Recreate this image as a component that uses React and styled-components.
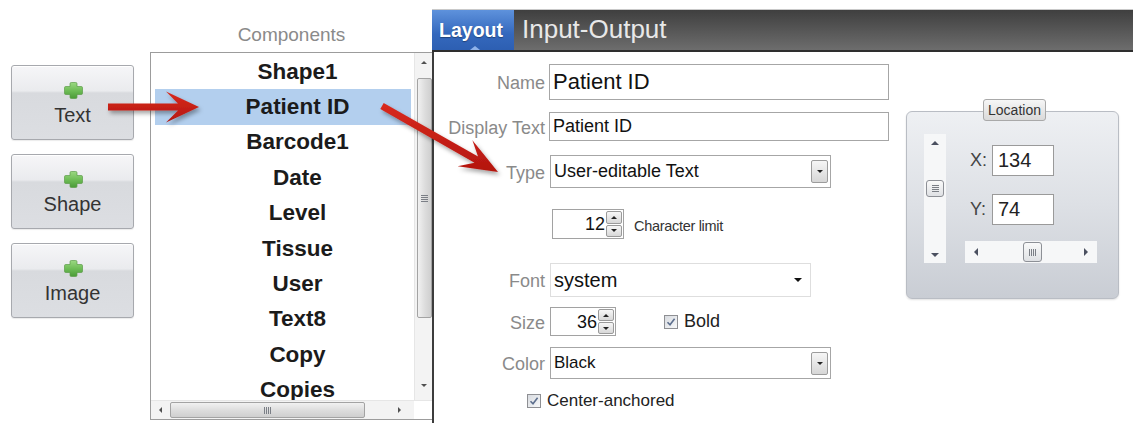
import React from "react";
import styled, { createGlobalStyle, css } from "styled-components";

const GlobalStyle = createGlobalStyle`
  html, body { margin: 0; padding: 0; background: #fff; }
  body { font-family: "Liberation Sans", Arial, sans-serif; }
  * { box-sizing: border-box; }
`;

const Page = styled.div`
  position: relative;
  width: 1133px;
  height: 423px;
  overflow: hidden;
  display: flex;
  background: #fff;
  font-family: "Liberation Sans", Arial, sans-serif;
`;

/* ---------- small shared pieces ---------- */

const Tri = styled.span`
  display: block;
  width: 0;
  height: 0;
  flex: none;
  ${({ $dir = "down", $s = 4, $c = "#505050" }) => {
    const t = `${$s}px solid transparent`;
    const f = `${$s}px solid ${$c}`;
    if ($dir === "up") return css`border-left: ${t}; border-right: ${t}; border-bottom: ${f};`;
    if ($dir === "down") return css`border-left: ${t}; border-right: ${t}; border-top: ${f};`;
    if ($dir === "left") return css`border-top: ${t}; border-bottom: ${t}; border-right: ${f};`;
    return css`border-top: ${t}; border-bottom: ${t}; border-left: ${f};`;
  }}
`;

const Grip = styled.span`
  display: block;
  flex: none;
  width: 7px;
  height: 7px;
  background: repeating-linear-gradient(
    ${({ $vertical }) => ($vertical ? "90deg" : "180deg")},
    #7b7f86 0 1px,
    transparent 1px 2px
  );
`;

const Spacer = styled.span`
  flex: ${({ $w }) => ($w ? "none" : "1")};
  width: ${({ $w }) => ($w ? `${$w}px` : "auto")};
`;

/* ---------- left palette ---------- */

const Palette = styled.div`
  width: 150px;
  flex: none;
  padding: 65px 0 0 11px;
  display: flex;
  flex-direction: column;
  gap: 14px;
`;

const AddButton = styled.button`
  width: 123px;
  height: 75px;
  border: 1px solid #a7a9ae;
  border-radius: 3px;
  background: linear-gradient(#f6f6f8 0%, #eaebee 34%, #d8dade 37%, #dcdee2 100%);
  box-shadow: inset 0 1px 0 #fff, 0 1px 1px rgba(0, 0, 0, 0.08);
  display: flex;
  flex-direction: column;
  align-items: center;
  padding: 16px 0 0;
  gap: 5px;
  font-family: inherit;
  font-size: 20px;
  line-height: 22px;
  color: #333;
  cursor: pointer;

  svg {
    flex: none;
    margin-left: 1px;
  }
`;

const PlusIcon = () => (
  <svg width="19" height="17" viewBox="0 0 19 17">
    <defs>
      <linearGradient id="plusFill" x1="0" y1="0" x2="0" y2="1">
        <stop offset="0" stopColor="#9bd882" />
        <stop offset="0.5" stopColor="#6fbd57" />
        <stop offset="1" stopColor="#4a9b37" />
      </linearGradient>
    </defs>
    <path
      d="M6 1.8 Q6 0.5 7.3 0.5 H11.7 Q13 0.5 13 1.8 V4.5 H17.2 Q18.5 4.5 18.5 5.8 V11.2 Q18.5 12.5 17.2 12.5 H13 V15.2 Q13 16.5 11.7 16.5 H7.3 Q6 16.5 6 15.2 V12.5 H1.8 Q0.5 12.5 0.5 11.2 V5.8 Q0.5 4.5 1.8 4.5 H6 Z"
      fill="url(#plusFill)"
      stroke="#5c9c49"
      strokeWidth="0.7"
    />
  </svg>
);

/* ---------- component list ---------- */

const ListColumn = styled.div`
  width: 283px;
  flex: none;
  display: flex;
  flex-direction: column;
`;

const ListTitle = styled.div`
  height: 52px;
  padding-top: 24px;
  text-align: center;
  font-size: 19px;
  line-height: 22px;
  color: #8a8a8a;
`;

const ListBox = styled.div`
  height: 368px;
  border: 1px solid #9c9c9c;
  border-right: none;
  display: flex;
  flex-direction: column;
`;

const ListBody = styled.div`
  flex: 1;
  min-height: 0;
  display: flex;
`;

const Items = styled.ul`
  flex: 1;
  margin: 0;
  padding: 1px 3px 0 4px;
  list-style: none;
  overflow: hidden;
`;

const Item = styled.li`
  height: 35.4px;
  display: flex;
  align-items: center;
  justify-content: center;
  padding-left: 29px;
  font-weight: bold;
  font-size: 22.5px;
  color: #1b1b1b;
  white-space: nowrap;
  background: ${({ $selected }) => ($selected ? "#b3cfee" : "transparent")};
`;

const VScroll = styled.div`
  width: ${({ $w }) => $w}px;
  flex: none;
  display: flex;
  flex-direction: column;
  align-items: center;
  background: #f3f3f3;
  border-left: 1px solid #e6e6e6;
`;

const ScrollEnd = styled.div`
  height: ${({ $h }) => $h}px;
  flex: none;
  display: flex;
  align-items: center;
  justify-content: center;
  align-self: stretch;
`;

const VThumb = styled.div`
  width: 15px;
  height: ${({ $h }) => $h}px;
  margin-top: ${({ $mt }) => $mt}px;
  flex: none;
  border: 1px solid #a3a3a3;
  border-radius: 2px;
  background: linear-gradient(90deg, #f1f1f1, #dcdcdc 55%, #cfcfcf);
  display: flex;
  align-items: center;
  justify-content: center;
`;

const HScroll = styled.div`
  height: 19px;
  flex: none;
  display: flex;
  align-items: center;
  background: #f3f3f3;
  border-top: 1px solid #e6e6e6;
`;

const HEnd = styled.div`
  width: ${({ $w }) => $w}px;
  height: 100%;
  flex: none;
  display: flex;
  align-items: center;
  justify-content: center;
`;

const HThumb = styled.div`
  width: ${({ $w }) => $w}px;
  height: 16px;
  flex: none;
  border: 1px solid #a3a3a3;
  border-radius: 2px;
  background: linear-gradient(#f1f1f1, #dcdcdc 55%, #cfcfcf);
  display: flex;
  align-items: center;
  justify-content: center;
`;

const Corner = styled.div`
  width: 19px;
  height: 100%;
  background: #fff;
  flex: none;
`;

/* ---------- editor panel ---------- */

const Editor = styled.div`
  flex: 1;
  display: flex;
  flex-direction: column;
  padding-top: 9px;
  margin-left: -1px;
`;

const TabBar = styled.div`
  height: 43px;
  flex: none;
  border-top: 1px solid #c9c9c9;
  border-bottom: 2px solid #2e2e2e;
  background: linear-gradient(#3f3f3f, #6d6d6d);
  display: flex;
  align-items: stretch;
`;

const Tab = styled.div`
  position: relative;
  display: flex;
  align-items: center;
  ${({ $active }) =>
    $active
      ? css`
          width: 82px;
          justify-content: center;
          padding-right: 4px;
          font-size: 19.5px;
          background: linear-gradient(#5e92dc, #3468bd 60%, #2d5fb2);
          color: #fff;
          font-weight: bold;
          text-shadow: 0 1px 1px rgba(0, 0, 0, 0.35);
        `
      : css`
          padding: 0 0 2px 8px;
          color: #e8e8e8;
          font-size: 26px;
        `}
`;

const TabNotch = styled.span`
  position: absolute;
  left: 38px;
  bottom: 0;
  border-left: 5px solid transparent;
  border-right: 5px solid transparent;
  border-bottom: 4px solid #8fb3ea;
`;

const EditorBody = styled.div`
  flex: 1;
  display: flex;
  border-left: 2px solid #3c3c3c;
`;

const Form = styled.div`
  width: 461px;
  flex: none;
  display: flex;
  flex-direction: column;
`;

const Row = styled.div`
  display: flex;
  align-items: center;
  height: ${({ $h }) => $h}px;
  margin-top: ${({ $mt }) => $mt}px;
  padding-left: ${({ $indent = 0 }) => $indent}px;
`;

const Label = styled.span`
  width: 111px;
  flex: none;
  text-align: right;
  font-size: 18px;
  color: #8a8a8a;
  margin-right: ${({ $gap = 4 }) => $gap}px;
  padding-top: 3px;
`;

const TextBox = styled.div`
  width: ${({ $w }) => $w}px;
  height: 100%;
  border: 1px solid ${({ $light }) => ($light ? "#dedede" : "#a6a6a6")};
  background: #fff;
  display: flex;
  align-items: center;
  padding: 0 3px;
  font-size: ${({ $fs }) => $fs}px;
  color: #111;
  white-space: nowrap;
`;

const BoxText = styled.span`
  flex: 1;
`;

const DropButton = styled.span`
  width: 17px;
  height: 23px;
  flex: none;
  border: 1px solid #9c9c9c;
  border-radius: 2px;
  background: linear-gradient(#f6f6f6, #d6d6d6);
  display: flex;
  align-items: center;
  justify-content: center;
  margin-right: -1px;
`;

const Spin = styled.div`
  width: ${({ $w }) => $w}px;
  height: 100%;
  border: 1px solid #a2a2a2;
  background: #fff;
  display: flex;
  align-items: stretch;
  padding: 1px 1px 1px 0;
  font-size: 18px;
  color: #111;
`;

const SpinValue = styled.span`
  flex: 1;
  align-self: center;
  text-align: right;
  padding-right: 1px;
  padding-top: 1px;
`;

const SpinButtons = styled.div`
  width: 16px;
  flex: none;
  display: flex;
  flex-direction: column;
  gap: 1px;
`;

const SpinButton = styled.span`
  flex: 1;
  border: 1px solid #9a9a9a;
  border-radius: 2px;
  background: linear-gradient(#f7f7f7, #d8d8d8);
  display: flex;
  align-items: center;
  justify-content: center;
`;

const Hint = styled.span`
  margin-left: 10px;
  padding-top: 4px;
  font-size: 14.5px;
  letter-spacing: -0.3px;
  color: #333;
`;

const CheckLabel = styled.label`
  display: flex;
  align-items: center;
  gap: ${({ $gap = 6 }) => $gap}px;
  margin-left: ${({ $ml = 0 }) => $ml}px;
  font-size: ${({ $fs = 18 }) => $fs}px;
  color: #222;
`;

const CheckBox = styled.span`
  width: 14px;
  height: 14px;
  flex: none;
  border: 1px solid #8e8f93;
  background: linear-gradient(135deg, #d8dbe0, #f7f8f9);
  display: flex;
  align-items: center;
  justify-content: center;
`;

const Tick = () => (
  <svg width="10" height="10" viewBox="0 0 10 10">
    <path d="M1.5 5.2 L4 7.8 L8.6 1.8" fill="none" stroke="#5d6f8e" strokeWidth="1.6" />
  </svg>
);

const Spinner = ({ value, width }) => (
  <Spin $w={width}>
    <SpinValue>{value}</SpinValue>
    <SpinButtons>
      <SpinButton>
        <Tri $dir="up" $s={3} $c="#222" />
      </SpinButton>
      <SpinButton>
        <Tri $dir="down" $s={3} $c="#222" />
      </SpinButton>
    </SpinButtons>
  </Spin>
);

/* ---------- location group ---------- */

const LocationGroup = styled.div`
  position: relative;
  width: 213px;
  height: 188px;
  margin: 59px 0 0 11px;
  border: 1px solid #b9bdc4;
  border-radius: 6px;
  background: linear-gradient(#eef0f3, #dde0e5 50%, #c9cdd4);
  box-shadow: 0 1px 2px rgba(0, 0, 0, 0.12);
  display: flex;
  padding: 22px 0 0 17px;
`;

const GroupLegend = styled.span`
  position: absolute;
  top: -13px;
  left: 76px;
  width: 63px;
  height: 22px;
  border: 1px solid #a9a9a9;
  border-radius: 3px;
  background: linear-gradient(#f6f6f6, #dadada);
  font-size: 14px;
  color: #333;
  display: flex;
  align-items: center;
  justify-content: center;
`;

const LocationBar = styled.div`
  width: 22px;
  height: 129px;
  flex: none;
  background: #f6f7f8;
  display: flex;
  flex-direction: column;
  align-items: center;
`;

const SmallThumb = styled.div`
  width: ${({ $w }) => $w}px;
  height: ${({ $h }) => $h}px;
  margin-top: ${({ $mt = 0 }) => $mt}px;
  margin-left: ${({ $ml = 0 }) => $ml}px;
  flex: none;
  border: 1px solid #8d9096;
  border-radius: 3px;
  background: linear-gradient(#fafafa, #dfe1e4);
  display: flex;
  align-items: center;
  justify-content: center;
`;

const LocationFields = styled.div`
  margin-left: 19px;
  display: flex;
  flex-direction: column;
`;

const CoordRow = styled.div`
  display: flex;
  align-items: center;
  height: 31px;
  margin-top: ${({ $mt }) => $mt}px;
  padding-left: 5px;
`;

const CoordLabel = styled.span`
  width: 22px;
  font-size: 18px;
  color: #444;
`;

const CoordBox = styled.span`
  width: 62px;
  height: 100%;
  border: 1px solid #9a9a9a;
  background: #fff;
  display: flex;
  align-items: center;
  padding-left: 5px;
  font-size: 20px;
  color: #222;
`;

const LocationHBar = styled.div`
  width: 132px;
  height: 22px;
  margin-top: 16px;
  background: #f6f7f8;
  display: flex;
  align-items: center;
  padding: 0 9px;
`;

/* ---------- callout arrows ---------- */

const Overlay = styled.svg`
  position: absolute;
  left: 0;
  top: 0;
  pointer-events: none;
`;

function arrowPoints(x1, y1, x2, y2, shaft, head, wing, notch) {
  const dx = x2 - x1;
  const dy = y2 - y1;
  const len = Math.hypot(dx, dy);
  const ux = dx / len;
  const uy = dy / len;
  const nx = -uy;
  const ny = ux;
  const at = (d, o) => [x1 + ux * d + nx * o, y1 + uy * d + ny * o];
  const pts = [
    at(0, -shaft),
    at(len - notch, -shaft),
    at(len - head, -wing),
    at(len, 0),
    at(len - head, wing),
    at(len - notch, shaft),
    at(0, shaft),
  ];
  return pts.map((p) => p.map((v) => v.toFixed(1)).join(",")).join(" ");
}

const Arrows = () => (
  <Overlay width="1133" height="423" viewBox="0 0 1133 423">
    <defs>
      <filter id="arrowShadow" x="-20%" y="-50%" width="140%" height="200%">
        <feDropShadow dx="2" dy="3" stdDeviation="2" floodColor="#000" floodOpacity="0.35" />
      </filter>
      <linearGradient id="arrowFill" x1="0" y1="0" x2="0" y2="1">
        <stop offset="0" stopColor="#d92a1e" />
        <stop offset="1" stopColor="#b3160f" />
      </linearGradient>
    </defs>
    <polygon points={arrowPoints(108, 107, 199, 107, 3.5, 33, 15.5, 21)} fill="url(#arrowFill)" filter="url(#arrowShadow)" />
    <polygon points={arrowPoints(382, 106, 498, 172, 3.5, 38, 15, 25)} fill="url(#arrowFill)" filter="url(#arrowShadow)" />
  </Overlay>
);

/* ---------- page ---------- */

const components = ["Shape1", "Patient ID", "Barcode1", "Date", "Level", "Tissue", "User", "Text8", "Copy", "Copies"];
const tools = ["Text", "Shape", "Image"];

export default function App() {
  return (
    <Page>
      <GlobalStyle />

      <Palette>
        {tools.map((t) => (
          <AddButton key={t}>
            <PlusIcon />
            {t}
          </AddButton>
        ))}
      </Palette>

      <ListColumn>
        <ListTitle>Components</ListTitle>
        <ListBox>
          <ListBody>
            <Items>
              {components.map((c) => (
                <Item key={c} $selected={c === "Patient ID"}>
                  {c}
                </Item>
              ))}
            </Items>
            <VScroll $w={19}>
              <ScrollEnd $h={18}>
                <Tri $dir="up" $s={3} />
              </ScrollEnd>
              <VThumb $h={240} $mt={7}>
                <Grip />
              </VThumb>
              <Spacer />
              <ScrollEnd $h={30}>
                <Tri $dir="down" $s={3} />
              </ScrollEnd>
            </VScroll>
          </ListBody>
          <HScroll>
            <HEnd $w={19}>
              <Tri $dir="left" $s={3} />
            </HEnd>
            <HThumb $w={195}>
              <Grip $vertical />
            </HThumb>
            <Spacer />
            <HEnd $w={30}>
              <Tri $dir="right" $s={3} />
            </HEnd>
            <Corner />
          </HScroll>
        </ListBox>
      </ListColumn>

      <Editor>
        <TabBar>
          <Tab $active>
            Layout
            <TabNotch />
          </Tab>
          <Tab>Input-Output</Tab>
        </TabBar>

        <EditorBody>
          <Form>
            <Row $h={36} $mt={12}>
              <Label>Name</Label>
              <TextBox $w={340} $fs={22}>Patient ID</TextBox>
            </Row>
            <Row $h={29} $mt={12}>
              <Label>Display Text</Label>
              <TextBox $w={340} $fs={18}>Patient ID</TextBox>
            </Row>
            <Row $h={33} $mt={14}>
              <Label $gap={5}>Type</Label>
              <TextBox $w={281} $fs={18}>
                <BoxText>User-editable Text</BoxText>
                <DropButton>
                  <Tri $dir="down" $s={3} $c="#222" />
                </DropButton>
              </TextBox>
            </Row>
            <Row $h={30} $mt={21} $indent={118}>
              <Spinner value="12" width={72} />
              <Hint>Character limit</Hint>
            </Row>
            <Row $h={34} $mt={24}>
              <Label $gap={5}>Font</Label>
              <TextBox $w={261} $fs={20} $light>
                <BoxText>system</BoxText>
                <Tri $dir="down" $s={4} $c="#111" />
                <Spacer $w={5} />
              </TextBox>
            </Row>
            <Row $h={29} $mt={10}>
              <Label $gap={5}>Size</Label>
              <Spinner value="36" width={66} />
              <CheckLabel $ml={48} $gap={6}>
                <CheckBox>
                  <Tick />
                </CheckBox>
                Bold
              </CheckLabel>
            </Row>
            <Row $h={32} $mt={11}>
              <Label $gap={5}>Color</Label>
              <TextBox $w={281} $fs={17}>
                <BoxText>Black</BoxText>
                <DropButton>
                  <Tri $dir="down" $s={3} $c="#222" />
                </DropButton>
              </TextBox>
            </Row>
            <Row $h={16} $mt={14} $indent={93}>
              <CheckLabel $gap={6} $fs={17}>
                <CheckBox>
                  <Tick />
                </CheckBox>
                Center-anchored
              </CheckLabel>
            </Row>
          </Form>

          <LocationGroup>
            <GroupLegend>Location</GroupLegend>
            <LocationBar>
              <ScrollEnd $h={17}>
                <Tri $dir="up" $s={4} $c="#4b5060" />
              </ScrollEnd>
              <SmallThumb $w={18} $h={17} $mt={29}>
                <Grip />
              </SmallThumb>
              <Spacer />
              <ScrollEnd $h={17}>
                <Tri $dir="down" $s={4} $c="#4b5060" />
              </ScrollEnd>
            </LocationBar>
            <LocationFields>
              <CoordRow $mt={11}>
                <CoordLabel>X:</CoordLabel>
                <CoordBox>134</CoordBox>
              </CoordRow>
              <CoordRow $mt={18}>
                <CoordLabel>Y:</CoordLabel>
                <CoordBox>74</CoordBox>
              </CoordRow>
              <LocationHBar>
                <Tri $dir="left" $s={4} $c="#4b5060" />
                <SmallThumb $w={19} $h={20} $ml={45}>
                  <Grip $vertical />
                </SmallThumb>
                <Spacer />
                <Tri $dir="right" $s={4} $c="#4b5060" />
              </LocationHBar>
            </LocationFields>
          </LocationGroup>
        </EditorBody>
      </Editor>

      <Arrows />
    </Page>
  );
}
